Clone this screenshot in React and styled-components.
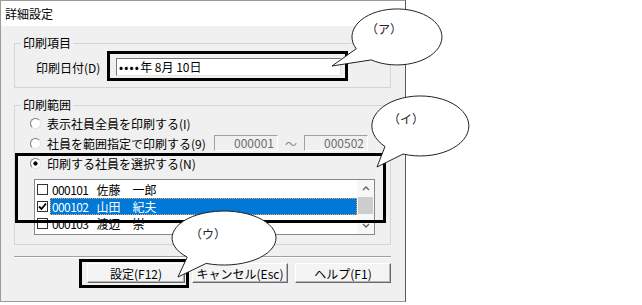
import styled, { createGlobalStyle } from "styled-components";

const GlobalStyle = createGlobalStyle`
  html, body {
    margin: 0;
    padding: 0;
    background: #fff;
  }
  body {
    font-family: "Noto Sans CJK JP", "Noto Sans", sans-serif;
    font-size: 12px;
    color: #000;
  }
`;

const Page = styled.div`
  position: relative;
  width: 642px;
  height: 305px;
  overflow: hidden;
  background: #fff;
`;

const Dialog = styled.div`
  width: 406px;
  height: 302px;
  box-sizing: border-box;
  border: 1px solid #9b9b9b;
  border-right-color: #5a5a5a;
  display: flex;
  flex-direction: column;
  background: #f0f0f0;
`;

const TitleBar = styled.div`
  height: 25px;
  background: #fff;
  display: flex;
  align-items: center;
  padding-left: 4px;
  font-size: 12px;
`;

const Body = styled.div`
  flex: 1;
  padding: 9px 14px 0 13px;
  display: flex;
  flex-direction: column;
`;

const Group = styled.fieldset`
  margin: ${(p) => p.$top || 0}px 0 0;
  padding: 0;
  border: 1px solid #d5d5d5;
  min-width: 0;
`;

const Legend = styled.legend`
  margin-left: 6px;
  padding: 0 2px;
  line-height: 16px;
  font-size: 12px;
`;

const GroupContent = styled.div`
  padding: ${(p) => p.$pad};
  display: flex;
  flex-direction: column;
`;

const FieldRow = styled.div`
  display: flex;
  align-items: center;
  height: 18px;
`;

const FieldLabel = styled.span`
  width: 80px;
`;

const DateInput = styled.div`
  width: 225px;
  height: 18px;
  box-sizing: border-box;
  background: #fff;
  border: 1px solid #7a7a7a;
  border-right-color: #e3e3e3;
  border-bottom-color: #e3e3e3;
  padding-left: 2px;
  line-height: 16px;
  white-space: pre;
`;

const Mask = styled.span`
  letter-spacing: 1.2px;
`;

const RadioRow = styled.div`
  display: flex;
  align-items: center;
  height: 20px;
`;

const RadioDot = styled.span`
  width: 11px;
  height: 11px;
  box-sizing: border-box;
  border-radius: 50%;
  border: 1px solid;
  border-color: #7a7a7a #e4e4e4 #e4e4e4 #7a7a7a;
  background: ${(p) =>
    p.$checked
      ? "radial-gradient(circle, #000 0 1.8px, #fff 2.4px)"
      : "#fff"};
  margin-right: 6px;
  flex: none;
`;

const Range = styled.div`
  margin-left: auto;
  margin-right: 7px;
  display: flex;
  align-items: center;
`;

const RangeBox = styled.div`
  width: 64px;
  height: 16px;
  box-sizing: border-box;
  border: 1px solid #fff;
  border-top-color: #a0a0a0;
  border-left-color: #a0a0a0;
  text-align: right;
  padding-right: 3px;
  line-height: 14px;
  color: #6d6d6d;
`;

const Tilde = styled.span`
  color: #8a8a8a;
  margin: 0 7px;
`;

const ListBox = styled.div`
  margin: 6px 0 0 4px;
  height: 56px;
  box-sizing: border-box;
  border: 1px solid #828790;
  background: #fff;
  display: flex;
`;

const Rows = styled.div`
  flex: 1;
  padding-top: 1px;
  overflow: hidden;
`;

const Row = styled.div`
  height: 17px;
  display: flex;
  align-items: center;
  padding-left: 2px;
`;

const CheckBox = styled.span`
  width: 11px;
  height: 11px;
  box-sizing: border-box;
  border: 1px solid #333;
  background: #fff;
  margin-right: 2px;
  flex: none;
  display: grid;
  place-items: center;
`;

const ItemText = styled.div`
  flex: 1;
  height: 17px;
  box-sizing: border-box;
  display: flex;
  align-items: center;
  padding-left: 1px;
  background: ${(p) => (p.$selected ? "#0078d7" : "transparent")};
  color: ${(p) => (p.$selected ? "#fff" : "#000")};
  border: 1px dotted ${(p) => (p.$selected ? "#e8a060" : "transparent")};
`;

const Code = styled.span`
  letter-spacing: -0.6px;
`;

const Name = styled.span`
  margin-left: 8px;
  white-space: pre;
`;

const ScrollBar = styled.div`
  width: 17px;
  background: #f7f7f7;
  display: flex;
  flex-direction: column;
`;

const ScrollArrow = styled.div`
  height: 17px;
  display: grid;
  place-items: center;
`;

const ScrollThumb = styled.div`
  height: 17px;
  margin: 0 1px;
  background: #cdcdcd;
`;

const ScrollTrack = styled.div`
  flex: 1;
`;

const Separator = styled.div`
  margin-top: 11px;
  border-top: 1px solid #a0a0a0;
  border-bottom: 1px solid #fff;
`;

const ButtonRow = styled.div`
  margin-top: 5px;
  display: flex;
  justify-content: flex-end;
  gap: 7px;
`;

const Button = styled.button`
  width: ${(p) => p.$w}px;
  height: 20px;
  padding: 0;
  font-family: inherit;
  font-size: 12px;
  color: #000;
  background: #f4f4f4;
  border: 1px solid;
  border-color: #fff #696969 #696969 #fff;
  box-shadow: inset -1px -1px #b4b4b4;
`;

const Highlight = styled.div`
  position: absolute;
  left: ${(p) => p.$x}px;
  top: ${(p) => p.$y}px;
  width: ${(p) => p.$w}px;
  height: ${(p) => p.$h}px;
  box-sizing: border-box;
  border: 3px solid #000;
  pointer-events: none;
`;

const CalloutLayer = styled.svg`
  position: absolute;
  left: 0;
  top: 0;
  width: 642px;
  height: 305px;
  pointer-events: none;
  font-family: "Noto Sans CJK JP", sans-serif;
`;

const Chevron = ({ down }) => (
  <svg width="8" height="5" viewBox="0 0 8 5">
    <path
      d={down ? "M1 1 L4 4 L7 1" : "M1 4 L4 1 L7 4"}
      fill="none"
      stroke="#606060"
      strokeWidth="1.3"
    />
  </svg>
);

const Tick = () => (
  <svg width="9" height="9" viewBox="0 0 9 9">
    <path d="M1 4.5 L3.5 7 L8 1.5" fill="none" stroke="#000" strokeWidth="1.8" />
  </svg>
);

// 吹き出しの輪郭: 楕円の大きい弧 + しっぽ
const calloutPath = ({ cx, cy, rx, ry, a1, a2, tx, ty }) => {
  const pt = (a) => {
    const r = (a * Math.PI) / 180;
    return [cx + rx * Math.cos(r), cy + ry * Math.sin(r)].map((v) => v.toFixed(1));
  };
  const [x1, y1] = pt(a1);
  const [x2, y2] = pt(a2);
  return `M${x2} ${y2} A${rx} ${ry} 0 1 0 ${x1} ${y1} L${tx} ${ty} Z`;
};

const callouts = [
  { label: "（ア）", lx: 384, ly: 28, cx: 397, cy: 37, rx: 45, ry: 28, a1: 155, a2: 125, tx: 332, ty: 66 },
  { label: "（イ）", lx: 406, ly: 118, cx: 420.5, cy: 126, rx: 48.5, ry: 30, a1: 137, a2: 111, tx: 377, ty: 167 },
  { label: "（ウ）", lx: 208, ly: 233, cx: 224, cy: 238, rx: 52, ry: 27, a1: 135, a2: 110, tx: 178, ty: 277 },
];

const employees = [
  { code: "000101", name: "佐藤　一郎", checked: false },
  { code: "000102", name: "山田　紀夫", checked: true, selected: true },
  { code: "000103", name: "渡辺　崇", checked: false },
];

export default function App() {
  return (
    <Page>
      <GlobalStyle />
      <Dialog>
        <TitleBar>詳細設定</TitleBar>
        <Body>
          <Group>
            <Legend>印刷項目</Legend>
            <GroupContent $pad="7px 0 11px 21px">
              <FieldRow>
                <FieldLabel>印刷日付(D)</FieldLabel>
                <DateInput>
                  <Mask>••••</Mask>
                  {"年 8月 10日"}
                </DateInput>
              </FieldRow>
            </GroupContent>
          </Group>

          <Group $top={9}>
            <Legend>印刷範囲</Legend>
            <GroupContent $pad="0 15px 9px 15px">
              <RadioRow>
                <RadioDot />
                表示社員全員を印刷する(I)
              </RadioRow>
              <RadioRow>
                <RadioDot />
                社員を範囲指定で印刷する(9)
                <Range>
                  <RangeBox>000001</RangeBox>
                  <Tilde>～</Tilde>
                  <RangeBox>000502</RangeBox>
                </Range>
              </RadioRow>
              <RadioRow>
                <RadioDot $checked />
                印刷する社員を選択する(N)
              </RadioRow>
              <ListBox>
                <Rows>
                  {employees.map((e) => (
                    <Row key={e.code}>
                      <CheckBox>{e.checked && <Tick />}</CheckBox>
                      <ItemText $selected={e.selected}>
                        <Code>{e.code}</Code>
                        <Name>{e.name}</Name>
                      </ItemText>
                    </Row>
                  ))}
                </Rows>
                <ScrollBar>
                  <ScrollArrow>
                    <Chevron />
                  </ScrollArrow>
                  <ScrollThumb />
                  <ScrollTrack />
                  <ScrollArrow>
                    <Chevron down />
                  </ScrollArrow>
                </ScrollBar>
              </ListBox>
            </GroupContent>
          </Group>

          <Separator />
          <ButtonRow>
            <Button $w={98}>設定(F12)</Button>
            <Button $w={96}>キャンセル(Esc)</Button>
            <Button $w={96}>ヘルプ(F1)</Button>
          </ButtonRow>
        </Body>
      </Dialog>

      <Highlight $x={107} $y={51} $w={241} $h={30} />
      <Highlight $x={15} $y={153} $w={371} $h={70} />
      <Highlight $x={79} $y={259} $w={110} $h={29} />

      <CalloutLayer viewBox="0 0 642 305">
        {callouts.map((c) => (
          <g key={c.label}>
            <path d={calloutPath(c)} fill="#fff" stroke="#222" strokeWidth="1" />
            <text
              x={c.lx}
              y={c.ly}
              textAnchor="middle"
              dominantBaseline="central"
              fontSize="12"
              fill="#222"
            >
              {c.label}
            </text>
          </g>
        ))}
      </CalloutLayer>
    </Page>
  );
}
